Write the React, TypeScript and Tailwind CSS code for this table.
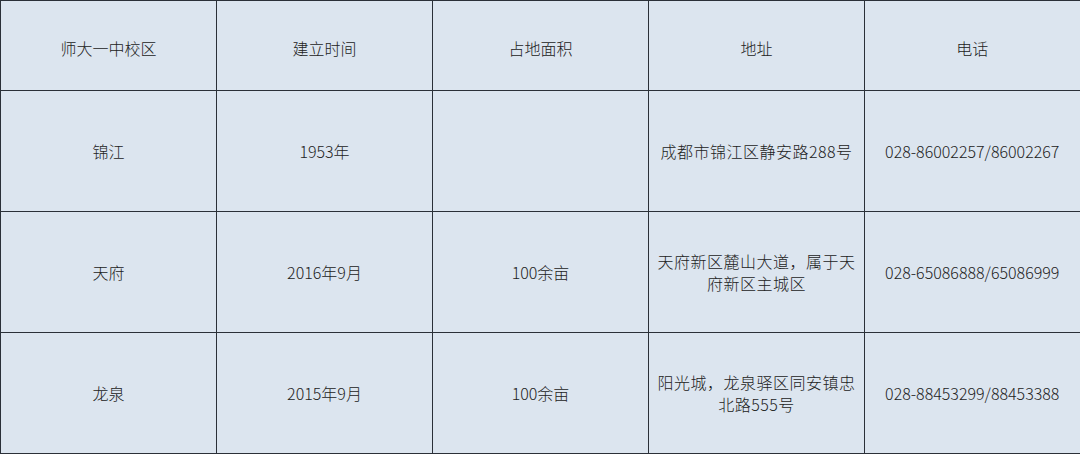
import React from "react";

const headers = ["师大一中校区", "建立时间", "占地面积", "地址", "电话"];

const rows = [
  { campus: "锦江", founded: "1953年", area: "", address: "成都市锦江区静安路288号", phone: "028-86002257/86002267", h: "h-[121px]" },
  { campus: "天府", founded: "2016年9月", area: "100余亩", address: "天府新区麓山大道，属于天府新区主城区", phone: "028-65086888/65086999", h: "h-[121px]" },
  { campus: "龙泉", founded: "2015年9月", area: "100余亩", address: "阳光城，龙泉驿区同安镇忠北路555号", phone: "028-88453299/88453388", h: "h-[121px]" },
];

const cell = "border border-[#2b3038] text-center align-middle px-2 text-[16px] leading-[22px] text-[#222] font-light";

const App = () => {
  return (
    <div className="w-[1080px] h-[454px] bg-[#dce5ef] overflow-hidden" style={{ fontFamily: '"Noto Sans CJK SC", "Noto Sans", sans-serif' }}>
      <table className="w-[1080px] table-fixed border-collapse border-r-2 border-r-[#2b3038]">
        <colgroup>
          <col className="w-[216px]" />
          <col className="w-[216px]" />
          <col className="w-[216px]" />
          <col className="w-[216px]" />
          <col className="w-[216px]" />
        </colgroup>
        <thead>
          <tr className="h-[90px]">
            {headers.map((h) => (
              <th key={h} className={`${cell} pt-1`}>
                {h}
              </th>
            ))}
          </tr>
        </thead>
        <tbody>
          {rows.map((r) => (
            <tr key={r.campus} className={r.h}>
              <td className={cell}>{r.campus}</td>
              <td className={cell}>{r.founded}</td>
              <td className={cell}>{r.area}</td>
              <td className={`${cell} tracking-[0.5px]`}>{r.address}</td>
              <td className={cell}>{r.phone}</td>
            </tr>
          ))}
        </tbody>
      </table>
    </div>
  );
};

export default App;
